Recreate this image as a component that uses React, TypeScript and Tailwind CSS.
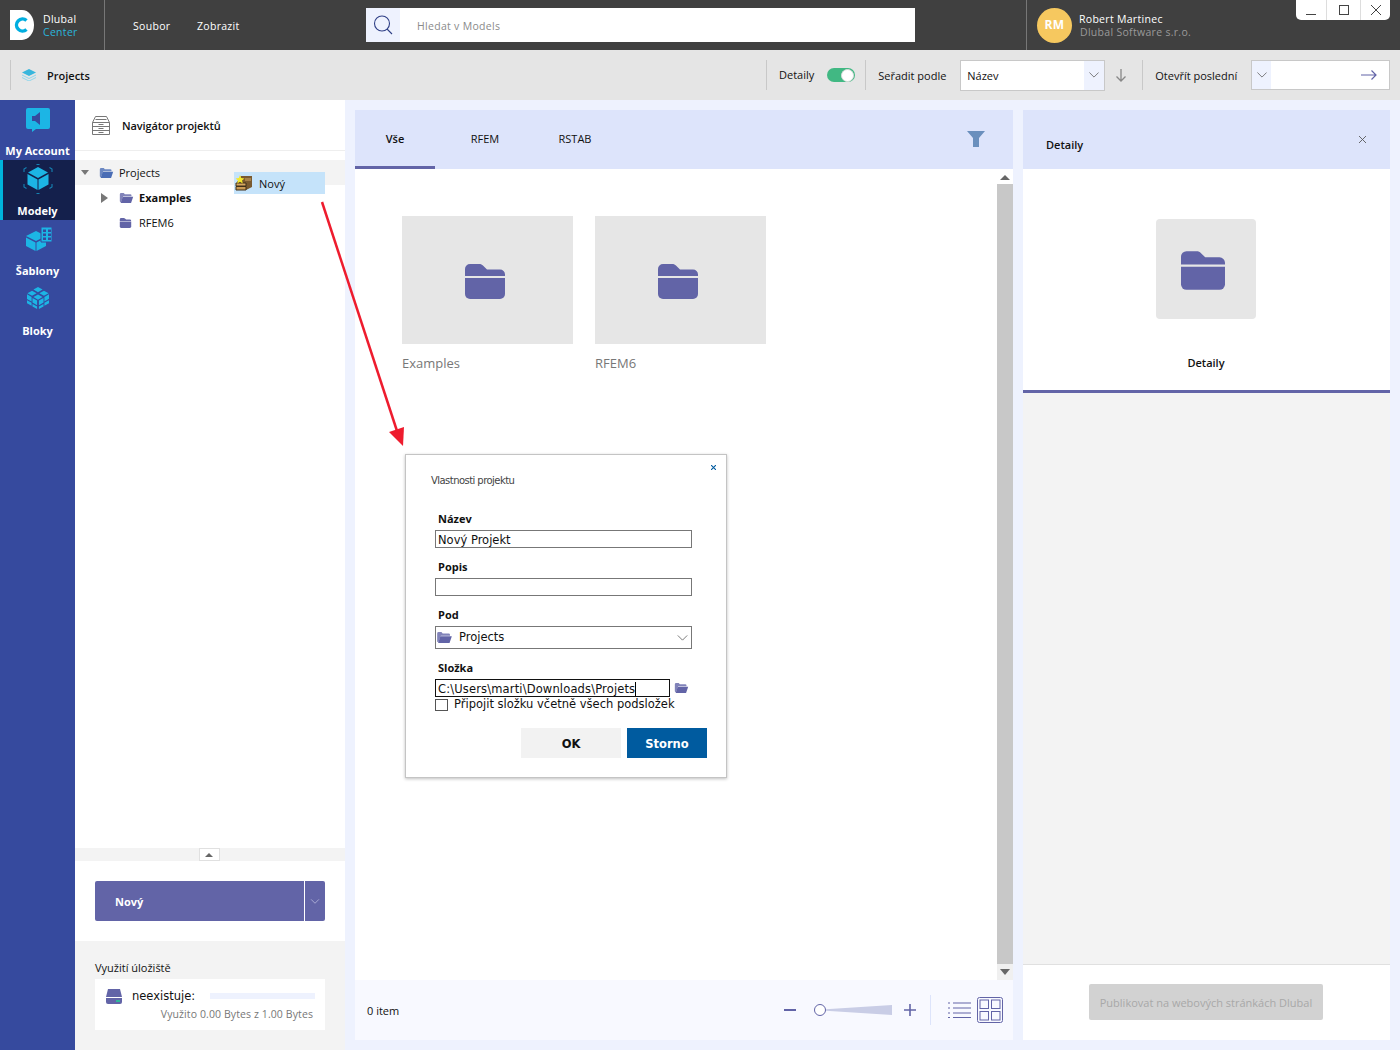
import { ReactNode } from 'react';

const UI_FONT = 'font-["Open_Sans","Noto_Sans",sans-serif]';
const DLG_FONT = 'font-["DejaVu_Sans",sans-serif]';

function FolderFlat({ className }: { className: string }) {
  return (
    <svg viewBox="0 0 40 35" className={className}>
      <path d="M0 12V5a5 5 0 0 1 5-5h9c2 0 3 .6 4.2 1.8L22 5.500h13a5 5 0 0 1 5 5V12z" fill="#6264a7" />
      <path d="M0 14h40v16a5 5 0 0 1-5 5H5a5 5 0 0 1-5-5z" fill="#6264a7" />
    </svg>
  );
}

function FolderOpen({ className, fill = '#6264a7' }: { className: string; fill?: string }) {
  return (
    <svg viewBox="0 0 16 12" className={className}>
      <path d="M0 1.500A1.500 1.500 0 0 1 1.500 0h3.200L6 1.500h6.500A1.500 1.500 0 0 1 14 3v1H4L1.500 11H1a1 1 0 0 1-1-1z" fill={fill} opacity="0.8" />
      <path d="M3.500 4.500H16L13.500 12H1z" fill={fill} />
    </svg>
  );
}

function Chevron({ className, stroke = '#666' }: { className: string; stroke?: string }) {
  return (
    <svg viewBox="0 0 12 7" className={className} fill="none" stroke={stroke} strokeWidth="1">
      <path d="M.5.5 6 6l5.500-5.500" />
    </svg>
  );
}

function SideItem({ label, active, children }: { label: string; active?: boolean; children: ReactNode }) {
  return (
    <div
      className={`flex h-[60px] flex-col items-center justify-between pb-[2px] pt-[6px] ${
        active ? 'border-l-[3px] border-[#00b4dc] bg-[#14204c] pr-[3px]' : ''
      }`}
    >
      {children}
      <span className="text-[11px] font-bold leading-[15px] text-white">{label}</span>
    </div>
  );
}

function Divider() {
  return <div className="h-[30px] w-px bg-[#c8c8c8]" />;
}

function Field({ label, children, className }: { label: string; children: ReactNode; className: string }) {
  return (
    <div className={className}>
      <div className={`pl-[3px] text-[11px] font-bold leading-[14px] text-[#111] ${UI_FONT}`}>{label}</div>
      {children}
    </div>
  );
}

function ProjectDialog() {
  return (
    <div className={`absolute left-[405px] top-[454px] h-[324px] w-[322px] border border-[#c4c4c4] bg-white shadow-[0_1px_3px_rgba(0,0,0,0.25)] ${DLG_FONT}`}>
      <svg viewBox="0 0 6 6" className="absolute left-[305px] top-[10px] h-[5px] w-[5px]" stroke="#005b9f" strokeWidth="1.300">
        <path d="M0 0l6 6M6 0 0 6" />
      </svg>
      <div className="pl-[25px] pt-[19px] text-[10px] leading-[13px] tracking-[-0.55px] text-[#444]">Vlastnosti projektu</div>
      <div className="pl-[29px] pr-[34px]">
        <Field label="Název" className="mt-[25px]">
          <div className="mt-[4px] h-[18px] border border-[#777] pl-[2px] text-[11.500px] leading-[18px] text-[#111]">Nový Projekt</div>
        </Field>
        <Field label="Popis" className="mt-[12px]">
          <div className="mt-[4px] h-[18px] border border-[#777]" />
        </Field>
        <Field label="Pod" className="mt-[12px]">
          <div className="mt-[4px] flex h-[23px] items-center border border-[#777] pl-[1px] pr-[3px] text-[11.500px] text-[#111]">
            <FolderOpen className="h-[11px] w-[15px]" />
            <span className="ml-[7px] flex-1">Projects</span>
            <Chevron className="h-[6px] w-[11px]" />
          </div>
        </Field>
        <Field label="Složka" className="mt-[12px]">
          <div className="mt-[4px] flex items-center">
            <div className="h-[18px] w-[235px] border border-[#111] pl-[2px] text-[11.500px] leading-[18px] tracking-[0.15px] text-[#111]">
              <span className="border-r border-black">C:\Users\marti\Downloads\Projets</span>
            </div>
            <FolderOpen className="ml-[4px] h-[10px] w-[15px]" />
          </div>
        </Field>
        <div className="mt-[1px] flex h-[14px] items-center text-[11.500px] text-[#111]">
          <div className="h-[12px] w-[13px] border border-[#555]" />
          <span className="ml-[6px] whitespace-nowrap">Připojit složku včetně všech podsložek</span>
        </div>
        <div className="mr-[-15px] mt-[16px] flex justify-end gap-[6px] text-[11.500px] font-bold">
          <div className="flex h-[30px] w-[100px] items-center justify-center bg-[#f2f2f2] pt-[3px] text-[#111]">OK</div>
          <div className="flex h-[30px] w-[80px] items-center justify-center bg-[#005b9f] pt-[3px] text-white">Storno</div>
        </div>
      </div>
    </div>
  );
}

export default function App() {
  return (
    <div className={`relative flex h-[1050px] w-[1400px] flex-col overflow-hidden bg-[#eef2fe] text-[11px] text-[#111] ${UI_FONT}`}>
      {/* title bar */}
      <header className="flex h-[50px] shrink-0 items-center bg-[#404040] text-[10.500px] tracking-[0.3px] text-white">
        <div className="flex h-full w-[105px] items-center border-r border-[#777] pl-[10px]">
          <svg viewBox="0 0 24 30" className="h-[30px] w-[24px]">
            <path d="M0 0h12a12 15 0 0 1 0 30H0z" fill="#fff" />
            <path d="M16.500 10.500a6 6 0 1 0 0 9" fill="none" stroke="#00aee0" strokeWidth="3.500" />
          </svg>
          <div className="ml-[9px] pt-[2px] leading-[13px]">
            <div>Dlubal</div>
            <div className="text-[#2ab4dc]">Center</div>
          </div>
        </div>
        <div className="ml-[28px] w-[64px] pt-[4px]">Soubor</div>
        <div className="w-[42px] whitespace-nowrap pt-[4px]">Zobrazit</div>
        <div className="ml-[127px] flex h-[34px] w-[549px] items-center bg-white">
          <div className="flex h-full w-[34px] items-center justify-center bg-[#eef2fe]">
            <svg viewBox="0 0 20 20" className="h-[20px] w-[20px]" fill="none" stroke="#2f3f86" strokeWidth="1.100">
              <circle cx="9" cy="8.500" r="7.500" />
              <path d="m14 14 5 5" />
            </svg>
          </div>
          <span className="ml-[17px] pt-[4px] text-[#8a8a8a]">Hledat v Models</span>
        </div>
        <div className="ml-[111px] flex h-full items-center border-l border-[#777] pl-[10px]">
          <div className="flex h-[35px] w-[35px] items-center justify-center rounded-full bg-[#f6c85f] text-[12px] font-bold text-white">RM</div>
          <div className="ml-[7px] pt-[2px] leading-[13px]">
            <div>Robert Martinec</div>
            <div className="pl-[1px] text-[#9a9a9a]">Dlubal Software s.r.o.</div>
          </div>
        </div>
        <div className="absolute left-[1296px] top-0 flex h-[20px] w-[94px] rounded-b-[5px] bg-white">
          <div className="relative w-[31px] border-r border-[#ddd]">
            <div className="absolute bottom-[5px] left-[10px] h-px w-[10px] bg-[#444]" />
          </div>
          <div className="flex w-[34px] items-center justify-center border-r border-[#ddd] pl-[1px]">
            <div className="h-[10px] w-[10px] border border-[#444]" />
          </div>
          <div className="flex flex-1 items-center justify-center">
            <svg viewBox="0 0 10 10" className="h-[10px] w-[10px]" stroke="#444" strokeWidth="1">
              <path d="M0 0l10 10M10 0 0 10" />
            </svg>
          </div>
        </div>
      </header>

      {/* toolbar */}
      <div className="flex h-[50px] shrink-0 items-center bg-[#e5e5e5] pl-[10px]">
        <Divider />
        <svg viewBox="0 0 14 12" className="ml-[11px] h-[12px] w-[14px]">
          <path d="M7 0l7 3.500L7 7 0 3.500z" fill="#38b6dc" />
          <path d="M0 6l7 3.500L14 6M0 8.500 7 12l7-3.500" fill="none" stroke="#8fd6ec" strokeWidth="1" />
        </svg>
        <span className="ml-[11px] w-[43px] pt-[2px] font-semibold">Projects</span>
        <div className="ml-[676px]"><Divider /></div>
        <span className="ml-[12px] pt-[1px]">Detaily</span>
        <div className="ml-[13px] flex h-[14px] w-[28px] items-center justify-end rounded-full bg-[#41b883] pr-[1px]">
          <div className="h-[13px] w-[13px] rounded-full border border-[#ddd] bg-white" />
        </div>
        <div className="ml-[10px]"><Divider /></div>
        <span className="ml-[12px] w-[82px] pt-[2px]">Seřadit podle</span>
        <div className="flex h-[31px] w-[145px] items-center border border-[#c8c8c8] bg-white pl-[6px]">
          <span className="flex-1 pt-[2px]">Název</span>
          <div className="flex h-full w-[20px] items-center justify-center bg-[#eef2fe]">
            <Chevron className="h-[6px] w-[10px]" />
          </div>
        </div>
        <svg viewBox="0 0 10 13" className="ml-[11px] h-[13px] w-[10px]" fill="none" stroke="#888" strokeWidth="1.300">
          <path d="M5 0v12M.5 7.500 5 12l4.500-4.500" />
        </svg>
        <div className="ml-[16px]"><Divider /></div>
        <span className="ml-[12px] w-[96px] whitespace-nowrap pt-[2px]">Otevřít poslední</span>
        <div className="flex h-[30px] w-[139px] items-center border border-[#c8c8c8] bg-white">
          <div className="flex h-full w-[19px] items-center justify-center bg-[#eef2fe]">
            <Chevron className="h-[6px] w-[10px]" />
          </div>
          <div className="flex-1" />
          <svg viewBox="0 0 16 10" className="mr-[12px] h-[10px] w-[16px]" fill="none" stroke="#6264a7" strokeWidth="1.200">
            <path d="M0 5h15M10.500.5 15 5l-4.500 4.500" />
          </svg>
        </div>
      </div>

      <div className="flex min-h-0 flex-1">
        {/* module rail */}
        <nav className="w-[75px] shrink-0 bg-[#364a9e]">
          <SideItem label="My Account">
            <svg viewBox="0 0 24 24" className="mt-[2px] h-[24px] w-[24px]">
              <path d="M2 0h20a2 2 0 0 1 2 2v17a2 2 0 0 1-2 2H10l-4 3v-3H2a2 2 0 0 1-2-2V2a2 2 0 0 1 2-2z" fill="#1cb5e5" />
              <path d="M6 8h3l5-4v13l-5-4H6z" fill="#364a9e" />
            </svg>
          </SideItem>
          <SideItem label="Modely" active>
            <svg viewBox="0 0 30 32" className="mt-[-3px] h-[32px] w-[30px]">
              <path d="M15 4l10 5.500L15 15 5 9.500z" fill="#1cb5e5" />
              <path d="M4.500 11l10 5.500V27l-10-5.500z" fill="#1cb5e5" />
              <path d="M25.500 11l-10 5.500V27l10-5.500z" fill="#1cb5e5" />
              <path d="M13.500 1.500h3M13.500 30.500h3M1 9V6l2.500-1.500M29 9V6l-2.500-1.500M1 21v3l2.500 1.500M29 21v3l-2.500 1.500" stroke="#1583b3" strokeWidth="1.100" fill="none" />
            </svg>
          </SideItem>
          <SideItem label="Šablony">
            <svg viewBox="0 0 26 24" className="ml-[3px] mt-[1px] h-[24px] w-[26px]" fill="#1cb5e5">
              <path d="M10 4l10 5-10 5L0 9z" />
              <path d="M0 10.500l9.500 5v8.500L0 19z" />
              <path d="M20 10.500l-9.500 5V24l9.500-5z" />
              <path d="M15 0h11v15H15z" stroke="#364a9e" strokeWidth="1" />
              <path d="M17 2.500h3v2.500h-3zM22 2.500h3v2.500h-3zM17 6.500h3V9h-3zM22 6.500h3V9h-3zM17 10.500h3V13h-3zM22 10.500h3V13h-3z" fill="#364a9e" />
            </svg>
          </SideItem>
          <SideItem label="Bloky">
            <svg viewBox="0 0 24 24" className="h-[24px] w-[22px]" fill="#1cb5e5">
              <path d="M12 0l5 2.800-5 2.800-5-2.800zM5.500 4l5 2.800-5 2.800L.5 6.800zM18.500 4l5 2.800-5 2.800-5-2.800zM12 8.200l5 2.800-5 2.800L7 11z" />
              <path d="M0 8l5 2.800v5L0 13zM24 8l-5 2.800v5l5-3zM6 12l5 2.800v5L6 17zM18 12l-5 2.800v5l5-2.800zM0 14.500l5 2.800v3.200L0 17.700zM24 14.500l-5 2.800v3.200l5-2.800zM6 18.500l5 2.800V24l-5-2.800zM18 18.500l-5 2.800V24l5-2.800z" />
            </svg>
          </SideItem>
        </nav>

        {/* project navigator */}
        <aside className="flex w-[270px] shrink-0 flex-col bg-white">
          <div className="flex h-[51px] shrink-0 items-center border-b border-[#eee] pl-[17px]">
            <svg viewBox="0 0 18 19" className="h-[19px] w-[18px]" fill="none" stroke="#777" strokeWidth="1">
              <path d="M3.500.5h11l3 6v12H.5v-12zM.5 6.500h17M.5 10.500h17M.5 14.500h17M3.500 3.500h11M6.500 8.500h5M6.500 12.500h5M6.500 16.500h5" />
            </svg>
            <span className="ml-[12px] pt-[2px] font-semibold tracking-[-0.1px]">Navigátor projektů</span>
          </div>
          <div className="flex-1 pt-[9px]">
            <div className="flex h-[25px] items-center bg-[#f3f3f3] pl-[6px]">
              <div className="h-0 w-0 border-x-[4px] border-t-[5px] border-x-transparent border-t-[#777]" />
              <FolderOpen className="ml-[10px] h-[10px] w-[15px]" fill="#4a6db5" />
              <span className="ml-[5px] pt-[2px]">Projects</span>
            </div>
            <div className="flex h-[25px] items-center pl-[26px]">
              <div className="h-0 w-0 border-y-[5px] border-l-[7px] border-y-transparent border-l-[#777]" />
              <FolderOpen className="ml-[11px] h-[10px] w-[15px]" />
              <span className="ml-[5px] pt-[2px] font-bold">Examples</span>
            </div>
            <div className="flex h-[25px] items-center pl-[44px]">
              <FolderFlat className="h-[10px] w-[13px]" />
              <span className="ml-[7px] pt-[2px]">RFEM6</span>
            </div>
          </div>
          <div className="flex h-[13px] shrink-0 justify-center bg-[#f3f3f3] pr-[2px]">
            <div className="flex h-[13px] w-[21px] items-center justify-center border border-[#e0e0e0] bg-white">
              <div className="h-0 w-0 border-x-[4px] border-b-[4px] border-x-transparent border-b-[#666]" />
            </div>
          </div>
          <div className="h-[80px] shrink-0 px-[20px] pt-[20px]">
            <div className="flex h-[40px] rounded-[2px] bg-[#6264a7] text-white">
              <div className="flex flex-1 items-center border-r border-white pl-[20px] pt-[2px] font-bold">Nový</div>
              <div className="flex w-[20px] items-center justify-center">
                <Chevron className="h-[5px] w-[10px]" stroke="#c5c6e6" />
              </div>
            </div>
          </div>
          <div className="h-[109px] shrink-0 bg-[#f3f3f3] px-[20px] pt-[19px]">
            <div className="leading-[15px]">Využití úložiště</div>
            <div className="mt-[4px] h-[51px] bg-white pl-[10px] pr-[10px] pt-[9px]">
              <div className="flex h-[16px] items-center">
                <svg viewBox="0 0 18 15" className="h-[15px] w-[18px]">
                  <path d="M3 0h12l2 8H1z" fill="#6264a7" />
                  <path d="M1 9h16v4a2 2 0 0 1-2 2H3a2 2 0 0 1-2-2z" fill="#6264a7" />
                  <path d="M11 11h4v2h-4z" fill="#2fb89a" />
                </svg>
                <span className={`ml-[9px] w-[78px] pt-[2px] text-[11.500px] ${DLG_FONT}`}>neexistuje:</span>
                <div className="h-[6px] flex-1 bg-[#eef2fe]" />
              </div>
              <div className="mt-[3px] pr-[2px] text-right text-[10.500px] leading-[15px] tracking-[0.1px] text-[#777]">Využito 0.00 Bytes z 1.00 Bytes</div>
            </div>
          </div>
        </aside>

        {/* content */}
        <main className="ml-[10px] mt-[10px] flex h-[930px] w-[658px] shrink-0 flex-col">
          <div className="flex h-[59px] shrink-0 items-stretch bg-[#dde4fb]">
            <div className="flex w-[80px] items-center justify-center border-b-[3px] border-[#6264a7] pt-[3px] font-semibold">Vše</div>
            <div className="flex w-[100px] items-center justify-center pb-[1px]">RFEM</div>
            <div className="ml-[20px] flex w-[40px] items-center justify-center pb-[1px]">RSTAB</div>
            <div className="flex flex-1 items-center justify-end pb-[2px] pr-[28px]">
              <svg viewBox="0 0 18 16" className="h-[16px] w-[18px]">
                <path d="M0 0h18l-6 7v9H6V7z" fill="#6a8fbd" />
              </svg>
            </div>
          </div>
          <div className="flex min-h-0 flex-1 bg-white">
            <div className="flex flex-1 gap-[22px] pl-[47px] pt-[47px]">
              {['Examples', 'RFEM6'].map(name => (
                <div key={name} className="w-[171px]">
                  <div className="flex h-[128px] items-center justify-center bg-[#e6e6e6] pr-[6px] pt-[3px]">
                    <FolderFlat className="h-[35px] w-[40px]" />
                  </div>
                  <div className="mt-[10px] text-[13px] leading-[18px] text-[#777]">{name}</div>
                </div>
              ))}
            </div>
            <div className="flex w-[16px] shrink-0 flex-col pt-[2px]">
              <div className="flex h-[13px] items-center justify-center">
                <div className="h-0 w-0 border-x-[5px] border-b-[5px] border-x-transparent border-b-[#666]" />
              </div>
              <div className="flex-1 bg-[#c8c8c8]" />
              <div className="flex h-[16px] items-center justify-center bg-[#f0f0f0]">
                <div className="h-0 w-0 border-x-[5px] border-t-[6px] border-x-transparent border-t-[#666]" />
              </div>
            </div>
          </div>
          <div className="flex h-[60px] shrink-0 items-center bg-[#f8f9ff] pl-[12px] pr-[10px]">
            <span className="flex-1 pt-[2px]">0 item</span>
            <div className="h-[2px] w-[12px] bg-[#6264a7]" />
            <div className="relative ml-[18px] flex h-[12px] w-[78px] items-center">
              <div className="absolute left-0 h-[10px] w-[78px] bg-[#c9cde6] [clip-path:polygon(0_50%,100%_0,100%_100%)]" />
              <div className="relative h-[12px] w-[12px] rounded-full border border-[#6264a7] bg-white" />
            </div>
            <svg viewBox="0 0 12 12" className="ml-[12px] h-[12px] w-[12px]" stroke="#6264a7" strokeWidth="1.600">
              <path d="M6 0v12M0 6h12" />
            </svg>
            <div className="ml-[14px] h-[30px] w-px bg-[#dde4fb]" />
            <svg viewBox="0 0 23 16" className="ml-[17px] h-[16px] w-[23px]" stroke="#6264a7" strokeWidth="1.200" fill="none">
              <path d="M5 1h18M5 6h18M5 11h18M5 15.500h18M0 1h2M0 6h2M0 11h2M0 15.500h2" />
            </svg>
            <svg viewBox="0 0 26 26" className="ml-[6px] h-[26px] w-[26px]" stroke="#6264a7" strokeWidth="1" fill="none">
              <rect x=".5" y=".5" width="25" height="25" rx="2" />
              <rect x="3" y="3" width="8.500" height="8.500" />
              <rect x="14.500" y="3" width="8.500" height="8.500" />
              <rect x="3" y="14.500" width="8.500" height="8.500" />
              <rect x="14.500" y="14.500" width="8.500" height="8.500" />
            </svg>
          </div>
        </main>

        {/* details */}
        <section className="ml-[10px] mt-[10px] flex h-[930px] w-[367px] shrink-0 flex-col bg-[#f3f3f3]">
          <div className="flex h-[59px] shrink-0 items-center justify-between bg-[#dde4fb] pl-[23px] pr-[24px]">
            <span className="mt-[11px] font-semibold">Detaily</span>
            <svg viewBox="0 0 8 8" className="h-[7px] w-[7px]" stroke="#555" strokeWidth="1">
              <path d="M0 0l8 8M8 0 0 8" />
            </svg>
          </div>
          <div className="flex h-[224px] shrink-0 flex-col items-center border-b-[3px] border-[#6264a7] bg-white pr-[1px] pt-[50px]">
            <div className="flex h-[100px] w-[100px] items-center justify-center rounded-[4px] bg-[#e6e6e6] pr-[6px] pt-[2px]">
              <FolderFlat className="h-[39px] w-[44px]" />
            </div>
            <span className="mt-[36px] font-semibold">Detaily</span>
          </div>
          <div className="flex-1" />
          <div className="flex h-[76px] shrink-0 items-start justify-center border-t border-[#e0e0e0] bg-white pr-[1px] pt-[19px]">
            <div className="flex h-[36px] w-[234px] items-center justify-center rounded-[2px] bg-[#d2d2d2] pt-[3px] text-[11px] text-[#a8a8a8]">
              Publikovat na webových stránkách Dlubal
            </div>
          </div>
        </section>
      </div>

      {/* context menu, annotation and dialog lie over the page */}
      <div className="absolute left-[234px] top-[172px] flex h-[22px] w-[91px] items-center bg-[#c5e3fa]">
        <svg viewBox="0 0 18 16" className="ml-[1px] h-[16px] w-[18px]">
          <path d="M6 1h11v11l-6 3H2V7z" fill="#7a5a30" />
          <path d="M1 8h10v3H1z" fill="#d8a860" stroke="#3f2f18" strokeWidth="1" />
          <path d="M1 11.500h10V15H1z" fill="#c99a55" stroke="#3f2f18" strokeWidth="1" />
          <path d="M10 3h6v3h-6z" fill="#a8814a" />
          <path d="M5 0l1.200 3L9.500 3.400 7 5.500l.8 3L5 6.800 2.200 8.500 3 5.500.5 3.400 3.800 3z" fill="#f5e82a" />
        </svg>
        <span className="ml-[6px] pt-[2px]">Nový</span>
      </div>
      <svg viewBox="0 0 90 250" className="absolute left-[315px] top-[200px] h-[250px] w-[90px]" fill="none">
        <path d="M7 2 82 231" stroke="#ee1c2e" strokeWidth="2.500" />
        <path d="M88 246 74 232l15-5z" fill="#ee1c2e" />
      </svg>
      <ProjectDialog />
    </div>
  );
}
